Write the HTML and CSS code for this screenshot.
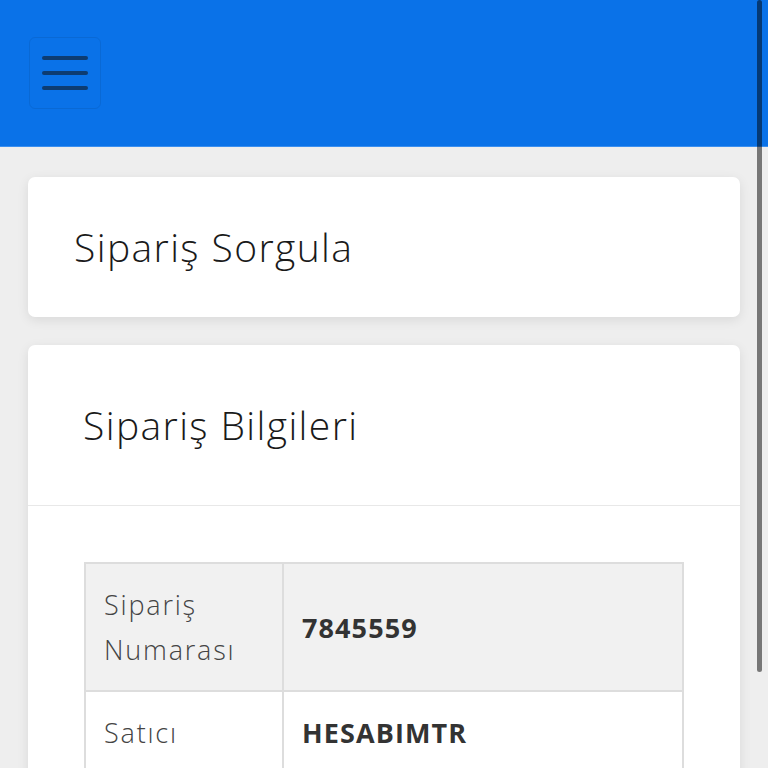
FILE: index.html
```html
<!DOCTYPE html>
<html lang="tr">
<head>
<meta charset="utf-8">
<title>Sipariş Sorgula</title>
<link rel="stylesheet" href="styles.css">
</head>
<body>
<header class="topbar">
  <button class="menu-btn" aria-label="Menü">
    <span class="bar"></span>
    <span class="bar"></span>
    <span class="bar"></span>
  </button>
</header>
<main class="content">
  <section class="card card-simple">
    <h1 class="card-title">Sipariş Sorgula</h1>
  </section>
  <section class="card">
    <div class="card-header">
      <h2 class="card-title">Sipariş Bilgileri</h2>
    </div>
    <div class="card-body">
      <table class="info-table">
        <tr class="row-alt">
          <th>Sipariş Numarası</th>
          <td>7845559</td>
        </tr>
        <tr>
          <th>Satıcı</th>
          <td>HESABIMTR</td>
        </tr>
      </table>
    </div>
  </section>
</main>
<div class="scrollbar"></div>
</body>
</html>
```
FILE: styles.css
```css
html, body {
  margin: 0;
  padding: 0;
  background: #eeeeee;
  font-family: "Open Sans", Lato, "Noto Sans", sans-serif;
  color: #222;
  overflow: hidden;
}
.topbar {
  background: #0a72e8;
  height: 147px;
  padding: 37px 29px 0;
  box-sizing: border-box;
  border-bottom: 1px solid #3a8ff0;
}
.menu-btn {
  width: 72px;
  height: 72px;
  background: transparent;
  border: 1px solid rgba(0, 0, 0, 0.08);
  border-radius: 6px;
  display: flex;
  flex-direction: column;
  align-items: center;
  justify-content: center;
  gap: 11px;
  padding: 0;
}
.bar {
  display: block;
  width: 46px;
  height: 4px;
  border-radius: 2px;
  background: #0d3c72;
}
.content {
  padding: 30px 28px;
  display: flex;
  flex-direction: column;
  gap: 28px;
}
.card {
  background: #fff;
  border-radius: 7px;
  box-shadow: 0 3px 12px rgba(0, 0, 0, 0.09);
}
.card-simple {
  height: 140px;
  display: flex;
  align-items: center;
  padding: 0 46px;
}
.card-title {
  margin: 0;
  font-weight: 300;
  font-size: 39px;
  line-height: 1.2;
  color: #1a1a1a;
  letter-spacing: 1.4px;
}
.card-header {
  height: 160px;
  display: flex;
  align-items: center;
  padding: 0 55px;
  border-bottom: 1px solid #e8e8e8;
}
.card-body {
  padding: 56px 56px 40px;
}
.info-table {
  width: 100%;
  border-collapse: collapse;
  border: 2px solid #dddddd;
  font-size: 27px;
}
.info-table th,
.info-table td {
  border: 2px solid #dddddd;
  text-align: left;
  vertical-align: middle;
  line-height: 45px;
  padding: 18px 18px;
}
.info-table th {
  width: 160px;
  font-weight: 300;
  color: #444;
  letter-spacing: 1.8px;
}
.info-table td {
  font-weight: 700;
  color: #333;
  letter-spacing: 1.1px;
}
.row-alt {
  background: #f1f1f1;
}
.scrollbar {
  position: fixed;
  right: 6px;
  top: 0;
  width: 5px;
  height: 672px;
  border-radius: 3px;
  background: rgba(0, 0, 0, 0.5);
}
```
